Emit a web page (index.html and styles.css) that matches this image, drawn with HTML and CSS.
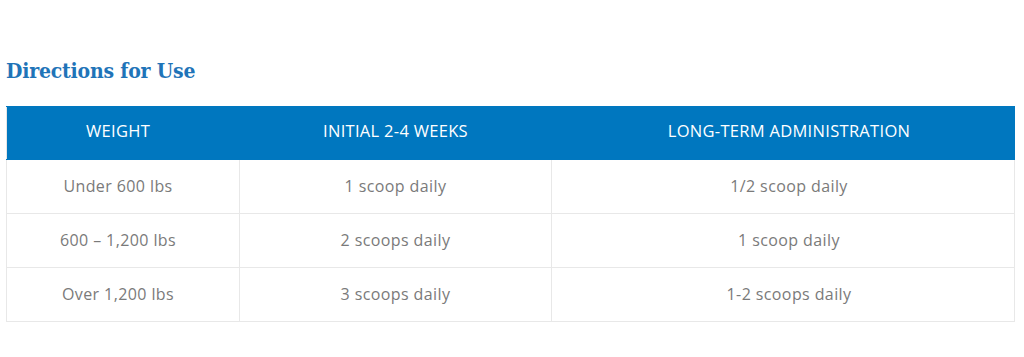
FILE: index.html
```html
<!DOCTYPE html>
<html>
<head>
<meta charset="utf-8">
<link rel="stylesheet" href="styles.css">
</head>
<body>
<div class="page">
  <h2 class="title">Directions for Use</h2>
  <table class="dosage">
    <colgroup>
      <col class="c1"><col class="c2"><col class="c3">
    </colgroup>
    <thead>
      <tr><th>WEIGHT</th><th>INITIAL 2-4 WEEKS</th><th>LONG-TERM ADMINISTRATION</th></tr>
    </thead>
    <tbody>
      <tr><td>Under 600 lbs</td><td>1 scoop daily</td><td>1/2 scoop daily</td></tr>
      <tr><td>600 – 1,200 lbs</td><td>2 scoops daily</td><td>1 scoop daily</td></tr>
      <tr><td>Over 1,200 lbs</td><td>3 scoops daily</td><td>1-2 scoops daily</td></tr>
    </tbody>
  </table>
</div>
</body>
</html>
```
FILE: styles.css
```css
html, body { margin: 0; padding: 0; background: #fff; }
.page { padding: 57px 9px 0 6px; }
.title {
  margin: 0 0 22px 0;
  font-family: "DejaVu Serif", serif;
  font-stretch: condensed;
  font-weight: bold;
  font-size: 21px;
  line-height: 27px;
  color: #1f74b8;
  letter-spacing: -0.2px;
}
.dosage {
  width: 100%;
  border-collapse: collapse;
  table-layout: fixed;
  font-family: "Open Sans", "Lato", sans-serif;
}
.c1 { width: 233px; }
.c2 { width: 312px; }
.dosage th {
  background: #0077bf;
  color: #fff;
  font-weight: normal;
  font-size: 16.5px;
  letter-spacing: 0.3px;
  line-height: 20px;
  padding: 14px 0 18px 0;
  text-align: center;
  border: 1px solid #0077bf;
  border-left: 1px solid #d9e8f3;
}
.dosage th:first-child { border-left-color: #e6e6e6; }
.dosage td {
  color: #7a7a7a;
  font-size: 16px;
  letter-spacing: 0.4px;
  line-height: 20px;
  padding: 16px 0 17px 0;
  text-align: center;
  border: 1px solid #e8e8e8;
}
.dosage th:first-child, .dosage td:first-child { padding-right: 10px; }
.dosage th:last-child, .dosage td:last-child { padding-left: 12px; }
```
